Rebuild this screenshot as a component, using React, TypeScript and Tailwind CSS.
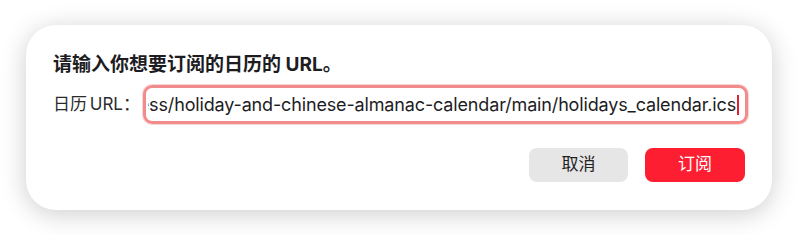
const url =
  "https://raw.githubusercontent.com/zqzess/holiday-and-chinese-almanac-calendar/main/holidays_calendar.ics";

const font = { fontFamily: '"Inter", "Noto Sans CJK SC", sans-serif' };

const App = () => {
  return (
    <div className="h-[235px] w-[798px] bg-white pl-[26px] pt-[25px]" style={font}>
      <div className="h-[185px] w-[746px] rounded-[30px] bg-white pl-[27px] pr-[24px] pt-[27px] shadow-[0_4px_26px_rgba(0,0,0,0.2)]">
        {/* 标题 */}
        <h1 className="whitespace-nowrap text-[19px] font-bold leading-[26px] text-[#1d1d1f]">
          请输入你想要订阅的日历的 URL。
        </h1>

        <div className="mt-[7px] flex items-center gap-[4px]">
          <span className="w-[86px] shrink-0 whitespace-nowrap text-[17px] text-[#2b2b2b] [word-spacing:-2px]">
            日历 URL：
          </span>
          <div className="flex h-[39px] min-w-0 flex-1 items-center overflow-hidden rounded-[9px] border-[3px] border-[#f28b8b] pl-[2px] pr-[6px] shadow-[0_0_0_1px_rgba(242,139,139,0.35)]">
            <div className="flex min-w-0 flex-1 justify-end overflow-hidden">
              <span className="whitespace-nowrap text-[18px] leading-[22px] tracking-[-0.15px] text-[#1d1d1f]">
                {url}
              </span>
            </div>
            <span className="ml-[1px] h-[20px] w-[2px] shrink-0 bg-[#e5202e]" />
          </div>
        </div>

        <div className="mt-[24px] flex justify-end gap-[17px] pr-[3px]">
          <button className="h-[34px] w-[99px] rounded-[8px] bg-[#e6e6e6] text-[17px] text-[#222]">
            取消
          </button>
          <button className="h-[34px] w-[100px] rounded-[8px] bg-[#fe1e32] text-[17px] text-white">
            订阅
          </button>
        </div>
      </div>
    </div>
  );
};

export default App;
